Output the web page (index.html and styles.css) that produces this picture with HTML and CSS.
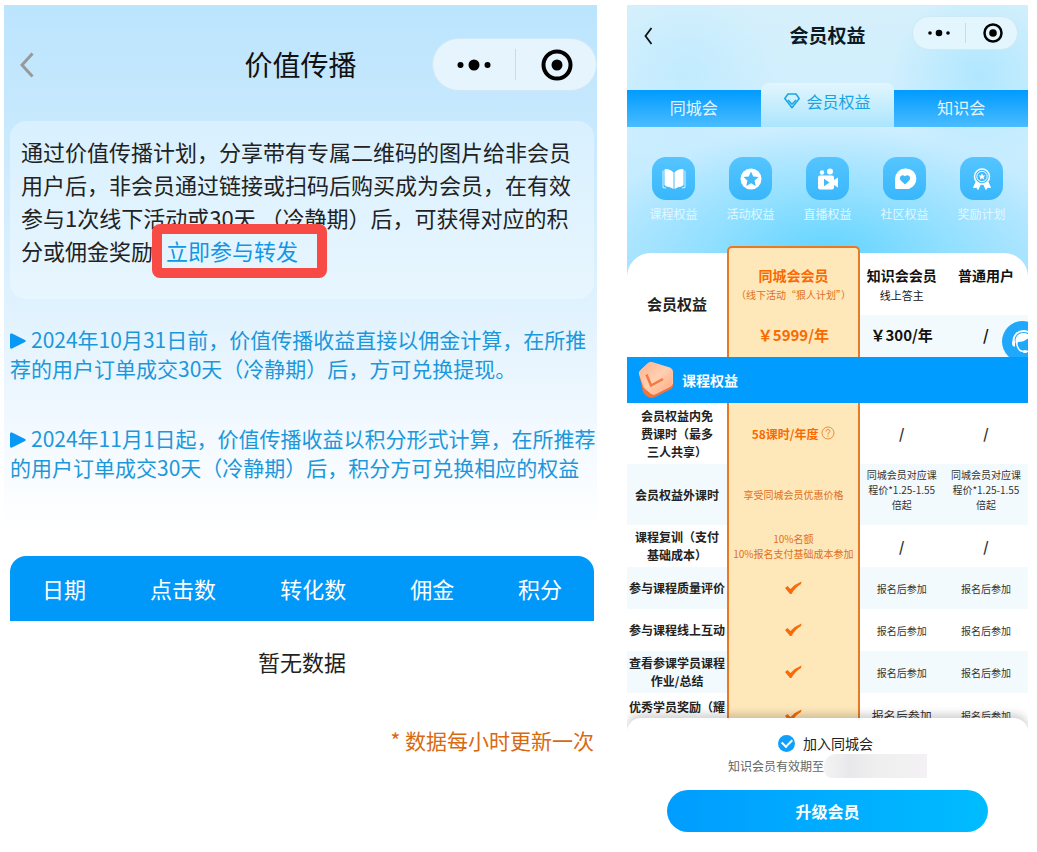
FILE: index.html
```html
<!DOCTYPE html>
<html lang="zh-CN">
<head>
    <meta charset="UTF-8">
    <meta name="viewport" content="width=device-width, initial-scale=1.0">
    <title>价值传播 - 会员权益</title>
    <link rel="stylesheet" href="styles.css">
</head>
<body>
    <div class="container">
        <!-- 价值传播 -->
        <section class="screen">
            <div class="share-top">
                <div class="share-header">
                    <button class="back" type="button" aria-label="返回">
                        <svg width="14" height="26" viewBox="0 0 14 26" fill="none" stroke="#999" stroke-width="3"><path d="M12.500 1.500 2 13l10.500 11.500"/></svg>
                    </button>
                    <h1>价值传播</h1>
                    <div class="capsule capsule-large">
                        <button type="button" aria-label="更多">
                            <svg width="34" height="14" viewBox="0 0 34 14"><circle cx="3.500" cy="7" r="3"/><circle cx="17" cy="7" r="5.500"/><circle cx="30.500" cy="7" r="3"/></svg>
                        </button>
                        <button type="button" aria-label="关闭">
                            <svg width="32" height="32" viewBox="0 0 32 32"><circle cx="16" cy="16" r="13.500" fill="none" stroke="#000" stroke-width="4"/><circle cx="16" cy="16" r="5.500"/></svg>
                        </button>
                    </div>
                </div>

                <div class="intro">
                    <p>通过价值传播计划，分享带有专属二维码的图片给非会员<br>用户后，非会员通过链接或扫码后购买成为会员，在有效<br>参与1次线下活动或30天 （冷静期）后，可获得对应的积<br>分或佣金奖励<a class="share-link" href="#">立即参与转发</a></p>
                </div>

                <div class="notes">
                    <p><svg class="arrow" width="16" height="16" viewBox="0 0 16 16"><path d="M0 1.500Q0 0 2 .5L15 7q1.500 1 0 2L2 15.500Q0 16 0 14.500z"/></svg>2024年10月31日前，价值传播收益直接以佣金计算，在所推<br>荐的用户订单成交30天（冷静期）后，方可兑换提现。</p>
                    <p><svg class="arrow" width="16" height="16" viewBox="0 0 16 16"><path d="M0 1.500Q0 0 2 .5L15 7q1.500 1 0 2L2 15.500Q0 16 0 14.500z"/></svg>2024年11月1日起，价值传播收益以积分形式计算，在所推荐<br>的用户订单成交30天（冷静期）后，积分方可兑换相应的权益</p>
                </div>
            </div>

            <table class="data-table">
                <thead>
                    <tr><th>日期</th><th>点击数</th><th>转化数</th><th>佣金</th><th>积分</th></tr>
                </thead>
                <tbody>
                    <tr><td colspan="5">暂无数据</td></tr>
                </tbody>
            </table>
            <p class="update-tip">* 数据每小时更新一次</p>
        </section>

        <!-- 会员权益 -->
        <section class="screen member">
            <div class="member-header">
                <button class="back" type="button" aria-label="返回">
                    <svg width="9" height="18" viewBox="0 0 9 18" fill="none" stroke="#111" stroke-width="1.800"><path d="M7.500 1 1.500 9l6 8"/></svg>
                </button>
                <h2>会员权益</h2>
                <div class="capsule">
                    <button type="button" aria-label="更多">
                        <svg width="22" height="8" viewBox="0 0 22 8"><circle cx="2" cy="4" r="1.800"/><circle cx="11" cy="4" r="3.300"/><circle cx="20" cy="4" r="1.800"/></svg>
                    </button>
                    <button type="button" aria-label="关闭">
                        <svg width="20" height="20" viewBox="0 0 20 20"><circle cx="10" cy="10" r="8.500" fill="none" stroke="#000" stroke-width="2.500"/><circle cx="10" cy="10" r="3.800"/></svg>
                    </button>
                </div>
            </div>

            <nav class="tabs">
                <button type="button">同城会</button>
                <button type="button" class="active">
                    <svg width="16" height="16" viewBox="0 0 16 16" fill="none" stroke="#1ba4e4" stroke-width="1.500" stroke-linejoin="round"><path d="M4 1h8l3.200 4.500L8 14.800.8 5.500z"/><path d="M4 7l4 4.200L12 7"/></svg>
                    会员权益
                </button>
                <button type="button">知识会</button>
            </nav>

            <ul class="benefits">
                <li>
                    <span class="icon"><svg width="24" height="24" viewBox="0 0 24 24" fill="#fff"><path d="M2.500 2.500 4 2q4.500 0 7.500 3.500V22Q8 19.500 4.500 19.500L2.500 18zM21.500 2.500 20 2q-4.500 0-7.500 3.500V22q3.500-2.500 7-2.500l2-1.500z"/><path d="M1 3.500v17l3 .5M23 3.500v17l-3 .5" fill="none" stroke="#fff" stroke-width=".8"/></svg></span>
                    课程权益
                </li>
                <li>
                    <span class="icon"><svg width="24" height="24" viewBox="0 0 24 24"><circle cx="12" cy="12" r="10.500" fill="#fff"/><path d="m12 4.500 2.200 4.900 5.400.6-4 3.600 1.100 5.300-4.700-2.700-4.700 2.700 1.100-5.300-4-3.600 5.400-.6z" fill="#42b9fb"/></svg></span>
                    活动权益
                </li>
                <li>
                    <span class="icon"><svg width="24" height="24" viewBox="0 0 24 24" fill="#fff"><circle cx="6" cy="5.500" r="2.200"/><circle cx="14" cy="4.500" r="3"/><rect x="2" y="8.500" width="16" height="14" rx="2"/><path d="m18 13 4-2.500v10L18 18z"/><path d="M8 11.800v7.500l5.500-3.800z" fill="#42b9fb"/></svg></span>
                    直播权益
                </li>
                <li>
                    <span class="icon"><svg width="24" height="24" viewBox="0 0 24 24"><path d="M12 1.500A10.300 10.300 0 1 1 12 22H3.500a1.500 1.500 0 0 1-1.500-1.500V12A10.300 10.300 0 0 1 12 1.500z" fill="#fff"/><path d="m12 17.500-4.200-3.900q-1.800-2.500 0-4.700 2-1.500 4.200.4 2.200-1.900 4.200-.4 1.800 2.200 0 4.700z" fill="#42b9fb"/></svg></span>
                    社区权益
                </li>
                <li>
                    <span class="icon"><svg width="20" height="24" viewBox="0 0 20 24" fill="none" stroke="#fff"><path d="M4.500 14 1.500 20.500l3-.3 1.500 2.300L8.500 17h3l2.500 5.500 1.500-2.300 3 .3-3-6.500z" fill="#fff"/><circle cx="10" cy="9.500" r="7.500" fill="#42b9fb" stroke-width="1.500"/><circle cx="10" cy="9.500" r="5.200"/><path d="m10 6.200 1 2.200 2.300.2-1.700 1.600.5 2.300-2.100-1.200-2.100 1.200.5-2.300-1.700-1.600 2.300-.2z" fill="#fff" stroke="none"/></svg></span>
                    奖励计划
                </li>
            </ul>

            <table class="compare">
                <colgroup><col class="col-name"><col class="col-city"><col class="col-other"><col class="col-other"></colgroup>
                <thead>
                    <tr class="plan-row">
                        <th class="corner" rowspan="2">会员权益</th>
                        <th class="city city-head">同城会会员<small>（线下活动“狠人计划”）</small></th>
                        <th>知识会会员<small class="sub">线上答主</small></th>
                        <th>普通用户</th>
                    </tr>
                    <tr class="price-row">
                        <td class="city">￥5999/年</td>
                        <td>￥300/年</td>
                        <td class="service-cell">/
                            <button class="service" type="button" aria-label="客服">
                                <svg width="28" height="28" viewBox="0 0 28 28"><path d="M4.500 13C4.500 6.500 9 3 14.500 3S24.500 6.500 24.500 13" fill="none" stroke="#fff" stroke-width="1.800"/><path d="M6.500 14C6 8.500 9.500 5 14.500 5s8.500 3.500 8 9q-2.500 0-4-3.500Q15 14 9 14q-1 2 0 5.500Q7 17.500 6.500 14z" fill="#fff"/><path d="M3.500 12.500H6v6H4.500Q3 17.500 3 15.500t.5-3zM25.500 12.500H23v6h1.500q1.500-1 1.500-3t-.5-3z" fill="#fff"/><path d="M8 17q1.500 6.500 6.500 6.500M24 18q-1 5-7 5.500" fill="none" stroke="#fff" stroke-width="1.300"/><ellipse cx="16" cy="23.500" rx="2.500" ry="1.500" fill="#fff"/></svg>
                            </button>
                        </td>
                    </tr>
                </thead>
                <tbody>
                    <tr>
                        <th class="group" colspan="4">
                            <div class="group-title">
                                <svg width="38" height="38" viewBox="0 0 38 38">
                                    <defs>
                                        <linearGradient id="badge" x1="0" y1="0" x2="1" y2="1"><stop offset="0" stop-color="#ffb18a"/><stop offset=".5" stop-color="#ffd0b3"/><stop offset="1" stop-color="#ffa57c"/></linearGradient>
                                    </defs>
                                    <path d="M2 13 6 31q3 5 8 6 2 0 4-1l16-8q2-1 2-3V12z" fill="#f4733a"/>
                                    <path d="M11 2.500q2-1.500 4-1l18 5.500q2.500 1 2.500 3.500V22q0 2-2 3L18 33q-2.500 1-4.500-1L8 27.500q-1-1-1.500-2.500L2.500 13q-.7-2 1-3.500z" fill="url(#badge)" stroke="#ffc6a6"/>
                                    <path d="m9.500 13.500 4.500 11L26 18" fill="none" stroke="#f47a42" stroke-width="2.500"/>
                                </svg>
                                课程权益
                            </div>
                        </th>
                    </tr>
                    <tr class="row-tall">
                        <th>会员权益内免<br>费课时（最多<br>三人共享）</th>
                        <td class="city hours">58课时/年度
                            <svg width="14" height="14" viewBox="0 0 14 14" fill="none" stroke="#f08b3c"><circle cx="7" cy="7" r="6"/><path d="M5 5.500Q5 3.500 7 3.500t2 1.800Q9 6.300 7 7.300v1.200M7 9.500v1.300"/></svg>
                        </td>
                        <td class="slash">/</td>
                        <td class="slash">/</td>
                    </tr>
                    <tr class="row-tall tint">
                        <th>会员权益外课时</th>
                        <td class="city">享受同城会员优惠价格</td>
                        <td class="price-note">同城会员对应课<br>程价*1.25-1.55<br>倍起</td>
                        <td class="price-note">同城会员对应课<br>程价*1.25-1.55<br>倍起</td>
                    </tr>
                    <tr>
                        <th>课程复训（支付<br>基础成本）</th>
                        <td class="city">10%名额<br>10%报名支付基础成本参加</td>
                        <td class="slash">/</td>
                        <td class="slash">/</td>
                    </tr>
                    <tr class="tint">
                        <th>参与课程质量评价</th>
                        <td class="city"><svg class="tick" width="18" height="14" viewBox="0 0 18 14"><path d="M1 7 3.500 5l3 3Q11 3 17.500.5L17 3Q11 6.500 7.500 13H6z"/></svg></td>
                        <td>报名后参加</td>
                        <td>报名后参加</td>
                    </tr>
                    <tr>
                        <th>参与课程线上互动</th>
                        <td class="city"><svg class="tick" width="18" height="14" viewBox="0 0 18 14"><path d="M1 7 3.500 5l3 3Q11 3 17.500.5L17 3Q11 6.500 7.500 13H6z"/></svg></td>
                        <td>报名后参加</td>
                        <td>报名后参加</td>
                    </tr>
                    <tr class="tint">
                        <th>查看参课学员课程<br>作业/总结</th>
                        <td class="city"><svg class="tick" width="18" height="14" viewBox="0 0 18 14"><path d="M1 7 3.500 5l3 3Q11 3 17.500.5L17 3Q11 6.500 7.500 13H6z"/></svg></td>
                        <td>报名后参加</td>
                        <td>报名后参加</td>
                    </tr>
                    <tr class="row-last">
                        <th>优秀学员奖励（耀<br>&nbsp;</th>
                        <td class="city"><svg class="tick" width="18" height="14" viewBox="0 0 18 14"><path d="M1 7 3.500 5l3 3Q11 3 17.500.5L17 3Q11 6.500 7.500 13H6z"/></svg></td>
                        <td class="large">报名后参加</td>
                        <td>报名后参加</td>
                    </tr>
                </tbody>
            </table>

            <!-- 底部操作栏 -->
            <div class="sheet">
                <label class="join"><input type="checkbox" checked>加入同城会</label>
                <div class="expire">知识会员有效期至<span class="mask"></span></div>
                <button class="upgrade" type="button">升级会员</button>
            </div>
        </section>
    </div>
</body>
</html>
```
FILE: styles.css
```css
* {
    margin: 0;
    padding: 0;
    box-sizing: border-box;
}

body {
    font-family: "Noto Sans CJK SC", sans-serif;
    color: #222;
    background: #fff;
    padding: 5px 9px 5px 4px;
}

button {
    font: inherit;
    border: none;
    background: none;
    cursor: pointer;
}

svg {
    display: block;
}

.container {
    display: grid;
    grid-template-columns: 593fr 401fr;
    gap: 30px;
    align-items: start;
}

.screen {
    min-width: 0;
}

/* 小程序胶囊按钮 */
.capsule {
    justify-self: end;
    display: grid;
    grid-template-columns: 1fr 1fr;
    width: 106px;
    height: 34px;
    border-radius: 17px;
    background: #e3f5fd;
    border: 1px solid #cfe8f5;
}

.capsule button {
    display: flex;
    align-items: center;
    justify-content: center;
}

.capsule button + button {
    position: relative;
    padding-left: 4px;
}

.capsule button + button::before {
    content: "";
    position: absolute;
    left: 0;
    top: 20%;
    height: 60%;
    border-left: 1px solid #c8dbe6;
}

.capsule-large {
    width: 165px;
    height: 53px;
    border-radius: 27px;
    background: #e6f5fd;
}

/* 价值传播 */
.share-top {
    padding-bottom: 46px;
    background: linear-gradient(#bbe5fd 0%, #c6e8fd 20%, #e0f2fe 58%, #f0f8ff 78%, #fff 100%);
}

.share-header {
    display: grid;
    grid-template-columns: 1fr auto 1fr;
    align-items: center;
    padding: 33px 0 30px;
}

.share-header .back {
    justify-self: start;
    padding-left: 16px;
}

.share-header h1 {
    font-size: 28px;
    line-height: 53px;
    font-weight: 400;
    color: #111;
}

.intro {
    margin: 0 3px 0 6px;
    padding: 14px 0 32px 11px;
    border-radius: 16px;
    background: linear-gradient(#d8f0ff, #e8f6fe);
    font-size: 22px;
    line-height: 33px;
    white-space: nowrap;
}

.share-link {
    position: relative;
    margin-left: 13px;
    color: #1296e6;
    text-decoration: none;
}

.share-link::after {
    content: "";
    position: absolute;
    inset: -10px -29px -12px -14px;
    border: 10px solid #f94b46;
    border-radius: 8px;
}

.notes {
    display: grid;
    gap: 41px;
    padding: 26px 0 0 6px;
    font-size: 21px;
    line-height: 29px;
    color: #1c98da;
    white-space: nowrap;
}

.arrow {
    display: inline-block;
    margin-right: 5px;
    vertical-align: -1px;
    fill: #0a98f5;
}

.data-table {
    width: calc(100% - 9px);
    margin: 28px 3px 0 6px;
    border-spacing: 0;
    font-size: 22px;
    text-align: center;
}

.data-table th {
    height: 65px;
    padding: 0 31px 2px;
    font-weight: 400;
    color: #fff;
    background: #0099f9;
    white-space: nowrap;
}

.data-table th:first-child {
    border-top-left-radius: 16px;
}

.data-table th:last-child {
    border-top-right-radius: 16px;
}

.data-table td {
    height: 80px;
}

.update-tip {
    padding: 24px 3px 0 0;
    font-size: 21px;
    line-height: 30px;
    text-align: right;
    color: #d8690f;
}

/* 会员权益 */
.member {
    background:
        radial-gradient(circle at 88% 70px, rgba(172, 230, 255, 0.9), transparent 90px),
        radial-gradient(circle at 15% 70px, rgba(190, 234, 255, 0.8), transparent 90px),
        radial-gradient(ellipse 240px 130px at 50% 250px, #62d4ff, rgba(120, 218, 255, 0.6) 50%, transparent),
        linear-gradient(#d6f0fb, #cdeeff 130px, #b0e5ff 280px, #fff 281px);
}

.member-header {
    display: grid;
    grid-template-columns: 1fr auto 1fr;
    align-items: start;
    height: 78px;
    padding: 11px 10px 0;
}

.member-header .back {
    justify-self: start;
    display: flex;
    align-items: center;
    height: 40px;
    padding-left: 7px;
}

.member-header h2 {
    font-size: 19px;
    line-height: 38px;
    font-weight: 700;
    color: #0c1a24;
}

.tabs {
    display: grid;
    grid-template-columns: repeat(3, 1fr);
    align-items: end;
}

.tabs button {
    height: 37px;
    padding-bottom: 3px;
    font-size: 16px;
    line-height: 24px;
    color: #e6f6ff;
    background: linear-gradient(#009bff, #4abcff);
}

.tabs .active {
    display: flex;
    align-items: center;
    justify-content: center;
    gap: 6px;
    height: 44px;
    padding-bottom: 8px;
    color: #1ba4e4;
    background: linear-gradient(#e2f6fd, #abe5fd);
    border-radius: 8px 8px 0 0;
}

.benefits {
    display: grid;
    grid-template-columns: repeat(5, 1fr);
    padding: 30px 8px 30px;
    list-style: none;
    font-size: 12px;
    line-height: 18px;
    text-align: center;
    color: #e3f7ff;
}

.benefits .icon {
    display: flex;
    align-items: center;
    justify-content: center;
    width: 43px;
    height: 43px;
    margin: 0 auto 5px;
    border-radius: 14px;
    background: linear-gradient(#55c5ff, #38b7fb);
}

.compare {
    width: 100%;
    table-layout: fixed;
    border-spacing: 0;
    border-radius: 24px 24px 0 0;
    background: #fff;
    font-size: 10px;
    line-height: 15px;
    text-align: center;
    color: #333;
    white-space: nowrap;
}

.col-name {
    width: 25%;
}

.col-city {
    width: 33%;
}

.col-other {
    width: 21%;
}

.compare tr {
    height: 42px;
}

.compare .row-tall {
    height: 61px;
}

.compare .row-last {
    height: 45px;
}

.compare tbody th {
    font-size: 12px;
    line-height: 18px;
    font-weight: 700;
    color: #222;
}

.tint {
    background: #f2fafd;
}

.compare .city {
    color: #e0701c;
    background: #fee7b9;
    border: solid #e97a25;
    border-width: 0 2px;
}

.compare .plan-row {
    height: 62px;
}

.plan-row th {
    padding-top: 12px;
    vertical-align: top;
    font-size: 14px;
    line-height: 21px;
    color: #111;
}

.plan-row .corner {
    padding: 0 0 3px;
    vertical-align: middle;
    font-size: 15px;
    color: #222;
}

.plan-row small {
    display: block;
    font-size: 10px;
    line-height: 18px;
    font-weight: 400;
}

.plan-row .sub {
    font-size: 11px;
}

.compare .city-head {
    position: relative;
    color: #f96a00;
}

/* 推荐列顶部凸起 */
.city-head::before {
    content: "";
    position: absolute;
    left: -2px;
    right: -2px;
    top: -7px;
    height: 12px;
    border: 2px solid #e97a25;
    border-bottom: none;
    border-radius: 5px 5px 0 0;
    background: #fee7b9;
}

.city-head small {
    color: #e0701c;
}

.price-row td {
    padding-bottom: 3px;
    font-size: 15px;
    font-weight: 700;
    color: #111;
    background: #f2fafd;
}

.compare .price-row .city {
    color: #f96a00;
}

.service-cell {
    position: relative;
    overflow: hidden;
}

.service {
    position: absolute;
    top: 6px;
    right: -15px;
    display: flex;
    align-items: center;
    justify-content: center;
    width: 41px;
    height: 41px;
    border-radius: 50%;
    background: #20a9fc;
}

.compare .group {
    height: 46px;
    padding-bottom: 1px;
    background: #009cff;
    color: #fff;
    font-size: 14px;
}

.group-title {
    display: flex;
    align-items: center;
    gap: 7px;
    padding-left: 10px;
}

.compare .hours {
    font-size: 12px;
    font-weight: 700;
    color: #f96a00;
}

.hours svg {
    display: inline-block;
    vertical-align: -1px;
}

.compare .price-note {
    padding-bottom: 10px;
}

.compare .slash {
    font-size: 14px;
    font-weight: 700;
}

.compare .large {
    font-size: 12px;
}

.tick {
    margin: 0 auto;
    fill: #fc6a08;
}

.sheet {
    position: relative;
    display: flex;
    flex-direction: column;
    align-items: center;
    margin-top: -20px;
    padding: 14px 40px 10px;
    border-radius: 14px 14px 0 0;
    background: #fff;
    box-shadow: 0 -4px 8px rgba(0, 0, 0, 0.18);
    clip-path: inset(-14px 0 0 0);
}

.join {
    display: flex;
    align-items: center;
    gap: 8px;
    padding-right: 4px;
    font-size: 14px;
    line-height: 22px;
}

.join input {
    appearance: none;
    width: 17px;
    height: 17px;
    border-radius: 50%;
    background: #109ffb;
    display: grid;
    place-items: center;
}

.join input:checked::before {
    content: "";
    width: 8px;
    height: 5px;
    border: solid #fff;
    border-width: 0 0 2px 2px;
    transform: rotate(-45deg) translate(1px, -1px);
}

.expire {
    display: flex;
    align-items: center;
    font-size: 12px;
    line-height: 24px;
    color: #666;
}

.mask {
    width: 103px;
    height: 24px;
    border-radius: 12px 0 0 8px;
    background: linear-gradient(90deg, #f4f4f5, #e8e8ea 25%, #efeff0 50%, #f3f1f3);
}

.upgrade {
    width: 100%;
    height: 42px;
    margin-top: 12px;
    border-radius: 21px;
    background: linear-gradient(90deg, #009dff, #00bcff);
    color: #fff;
    font-size: 16px;
    font-weight: 700;
}
```
